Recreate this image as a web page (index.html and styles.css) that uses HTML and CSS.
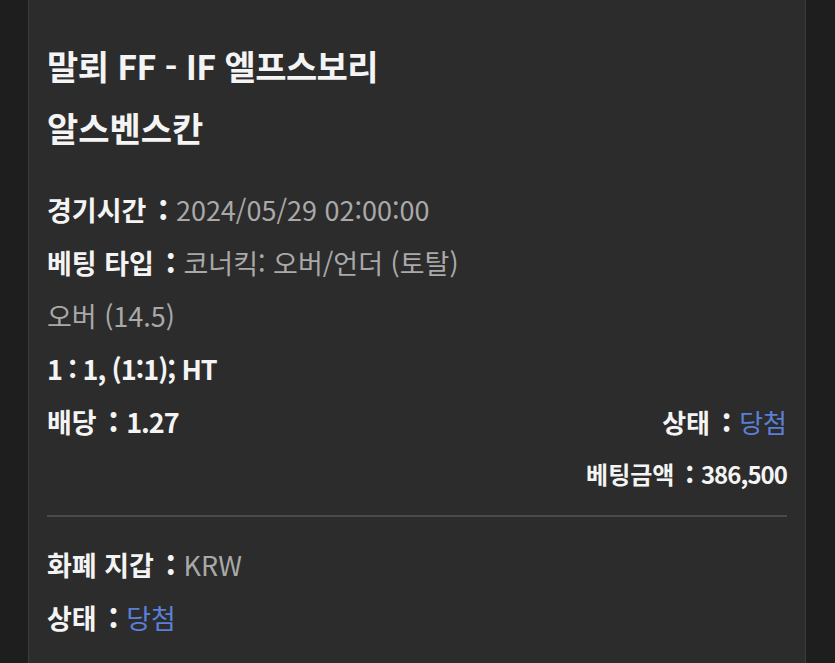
FILE: index.html
```html
<!DOCTYPE html>
<html lang="ko">
<head>
<meta charset="utf-8">
<link rel="stylesheet" href="styles.css">
</head>
<body>
<div class="card">
  <div class="title">
    <div class="tight">말뢰 FF - IF 엘프스보리</div>
    <div>알스벤스칸</div>
  </div>
  <div class="info">
    <div class="row"><span class="lbl">경기시간</span><span class="colon">:</span><span class="val">2024/05/29 02:00:00</span></div>
    <div class="row"><span class="lbl">베팅 타입</span><span class="colon">:</span><span class="val">코너킥: 오버/언더 (토탈)</span></div>
    <div class="row"><span class="val">오버 (14.5)</span></div>
    <div class="row"><span class="lbl num">1 : 1, (1:1); HT</span></div>
    <div class="row split">
      <span><span class="lbl">배당</span><span class="colon">:</span><span class="lbl num">1.27</span></span>
      <span class="small"><span class="lbl">상태</span><span class="colon">:</span><span class="win">당첨</span></span>
    </div>
    <div class="row right"><span class="lbl">베팅금액</span><span class="colon">:</span><span class="lbl num">386,500</span></div>
  </div>
  <hr class="sep">
  <div class="info">
    <div class="row"><span class="lbl">화폐 지갑</span><span class="colon">:</span><span class="val">KRW</span></div>
    <div class="row"><span class="lbl">상태</span><span class="colon">:</span><span class="win">당첨</span></div>
  </div>
</div>
</body>
</html>
```

FILE: styles.css
```css
html, body {
  margin: 0;
  padding: 0;
  background: #1e1e1e;
  height: 100%;
  overflow: hidden;
}
body {
  font-family: "Noto Sans CJK KR", "Noto Sans", sans-serif;
  color: #f4f4f4;
}
.card {
  box-sizing: border-box;
  margin-left: 28px;
  width: 778px;
  min-height: 100%;
  background: #2c2c2c;
  border-left: 1px solid #3c3c3c;
  border-right: 1px solid #3c3c3c;
  padding: 35px 18px 0 18px;
}
.title {
  font-size: 34px;
  font-weight: 700;
  line-height: 62px;
}
.title .tight { letter-spacing: -0.6px; }
.info {
  margin-top: 24px;
  font-size: 27px;
  line-height: 53px;
}
.row {
  display: flex;
  align-items: baseline;
  white-space: nowrap;
}
.row.split { justify-content: space-between; }
.row .small { font-size: 26px; }
.row.right {
  justify-content: flex-end;
  line-height: 52px;
  font-size: 24px;
}
.lbl { font-weight: 700; color: #f4f4f4; }
.num { letter-spacing: -0.04em; }
.colon {
  font-weight: 900;
  color: #f4f4f4;
  margin: 0 8px 0 12px;
}
.row.right .colon { margin: 0 7px 0 11px; }
.val { color: #a9a9a9; }
.win { color: #5b7fd7; }
.sep {
  margin: 15px 0 0 0;
  border: 0;
  height: 2px;
  background: #4a4a4a;
}
.sep + .info { margin-top: 21px; }
```
